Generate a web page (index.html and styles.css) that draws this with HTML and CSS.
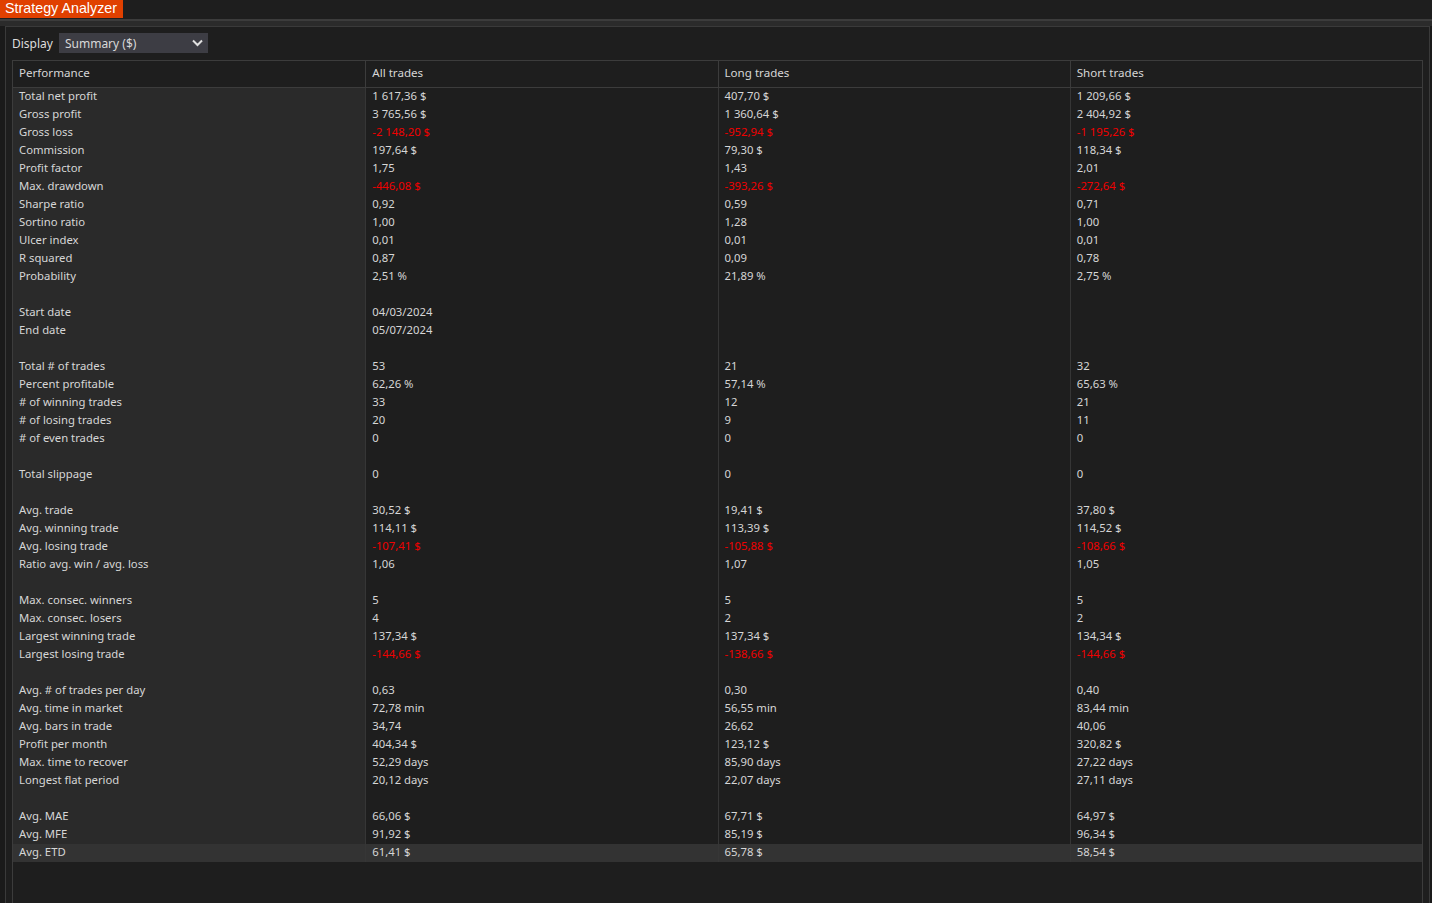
FILE: index.html
```html
<!DOCTYPE html>
<html>
<head>
<meta charset="utf-8">
<title>Strategy Analyzer</title>
<link rel="stylesheet" href="styles.css">
</head>
<body>
<div class="app">
  <div class="topbar"><div class="tab">Strategy Analyzer</div></div>
  <div class="band"></div>
  <div class="main">
    <div class="panel">
      <div class="toolbar">
        <span class="label">Display</span>
        <div class="select">
          <span>Summary ($)</span>
          <svg class="chev" width="11" height="8" viewBox="0 0 11 8"><path d="M1 1.5 L5.5 6 L10 1.5" fill="none" stroke="#e0e0e0" stroke-width="2"/></svg>
        </div>
      </div>
      <div class="grid">
        <div class="row head"><div class="c">Performance</div><div class="c">All trades</div><div class="c">Long trades</div><div class="c">Short trades</div></div>
        <div id="body"></div>
      </div>
    </div>
  </div>
</div>
<script src="app.js"></script>
</body>
</html>
```
FILE: app.js
```js
const rows = [
 ["Total net profit","1 617,36 $","407,70 $","1 209,66 $"],
 ["Gross profit","3 765,56 $","1 360,64 $","2 404,92 $"],
 ["Gross loss","-2 148,20 $","-952,94 $","-1 195,26 $"],
 ["Commission","197,64 $","79,30 $","118,34 $"],
 ["Profit factor","1,75","1,43","2,01"],
 ["Max. drawdown","-446,08 $","-393,26 $","-272,64 $"],
 ["Sharpe ratio","0,92","0,59","0,71"],
 ["Sortino ratio","1,00","1,28","1,00"],
 ["Ulcer index","0,01","0,01","0,01"],
 ["R squared","0,87","0,09","0,78"],
 ["Probability","2,51 %","21,89 %","2,75 %"],
 ["","","",""],
 ["Start date","04/03/2024","",""],
 ["End date","05/07/2024","",""],
 ["","","",""],
 ["Total # of trades","53","21","32"],
 ["Percent profitable","62,26 %","57,14 %","65,63 %"],
 ["# of winning trades","33","12","21"],
 ["# of losing trades","20","9","11"],
 ["# of even trades","0","0","0"],
 ["","","",""],
 ["Total slippage","0","0","0"],
 ["","","",""],
 ["Avg. trade","30,52 $","19,41 $","37,80 $"],
 ["Avg. winning trade","114,11 $","113,39 $","114,52 $"],
 ["Avg. losing trade","-107,41 $","-105,88 $","-108,66 $"],
 ["Ratio avg. win / avg. loss","1,06","1,07","1,05"],
 ["","","",""],
 ["Max. consec. winners","5","5","5"],
 ["Max. consec. losers","4","2","2"],
 ["Largest winning trade","137,34 $","137,34 $","134,34 $"],
 ["Largest losing trade","-144,66 $","-138,66 $","-144,66 $"],
 ["","","",""],
 ["Avg. # of trades per day","0,63","0,30","0,40"],
 ["Avg. time in market","72,78 min","56,55 min","83,44 min"],
 ["Avg. bars in trade","34,74","26,62","40,06"],
 ["Profit per month","404,34 $","123,12 $","320,82 $"],
 ["Max. time to recover","52,29 days","85,90 days","27,22 days"],
 ["Longest flat period","20,12 days","22,07 days","27,11 days"],
 ["","","",""],
 ["Avg. MAE","66,06 $","67,71 $","64,97 $"],
 ["Avg. MFE","91,92 $","85,19 $","96,34 $"],
 ["Avg. ETD","61,41 $","65,78 $","58,54 $"]
];
const body = document.getElementById("body");
rows.forEach((r, i) => {
  const row = document.createElement("div");
  row.className = "row" + (i === rows.length - 1 ? " sel" : "");
  r.forEach((v) => {
    const c = document.createElement("div");
    c.className = "c" + (v.startsWith("-") ? " neg" : "");
    c.textContent = v;
    row.appendChild(c);
  });
  body.appendChild(row);
});
```
FILE: styles.css
```css
html, body { margin: 0; padding: 0; height: 100%; background: #1e1e1e; }
body { font-family: "Noto Sans", "Open Sans", sans-serif; font-size: 11.3px; color: #d6d6d6; overflow: hidden; }
.app { display: flex; flex-direction: column; height: 903px; }
.topbar { height: 19px; background: #1e1e1e; display: flex; }
.tab { background: #e04000; color: #fff; font-family: "Liberation Sans", Arial, sans-serif; font-size: 14.3px; line-height: 17px; height: 18px; padding: 0 6px 0 5px; }
.band { height: 2px; background: #3c3c3c; border-bottom: 5px solid #2b2b2b; }
.main { flex: 1; display: flex; background: #1a1a1a; padding: 0 2px 0 5px; min-height: 0; }
.panel { flex: 1; display: flex; flex-direction: column; border: 1px solid #3a3a3a; border-bottom: none; background: #1e1e1e; padding: 6px 6px 0 6px; min-height: 0; }
.toolbar { display: flex; align-items: center; height: 20px; gap: 6px; margin-bottom: 7px; }
.label { font-size: 12px; color: #dcdcdc; line-height: 19px; }
.select { width: 149px; height: 20px; background: #3d3d44; display: flex; align-items: center; justify-content: space-between; padding: 0 5px 0 6px; box-sizing: border-box; color: #d8d8d8; font-size: 12px; line-height: 19px; }
.grid { flex: 1; border: 1px solid #3c3c3c; border-bottom: none; background: #1e1e1e; }
.row { display: grid; grid-template-columns: repeat(4, 1fr); height: 18px; line-height: 16px; }
.row .c { padding-left: 6px; white-space: nowrap; overflow: hidden; }
.row .c + .c { border-left: 1px solid #363636; }
.row .c:first-child { background: #2a2a2a; }
.row.head { height: 26px; line-height: 24px; border-bottom: 1px solid #3c3c3c; }
.row.head .c { font-size: 11.6px; }
.row.head .c:first-child { background: #1e1e1e; }
.row.head .c + .c { border-left-color: #3c3c3c; }
.row.sel .c, .row.sel .c:first-child { background: #333333; }
.neg { color: #f00000; }
```
